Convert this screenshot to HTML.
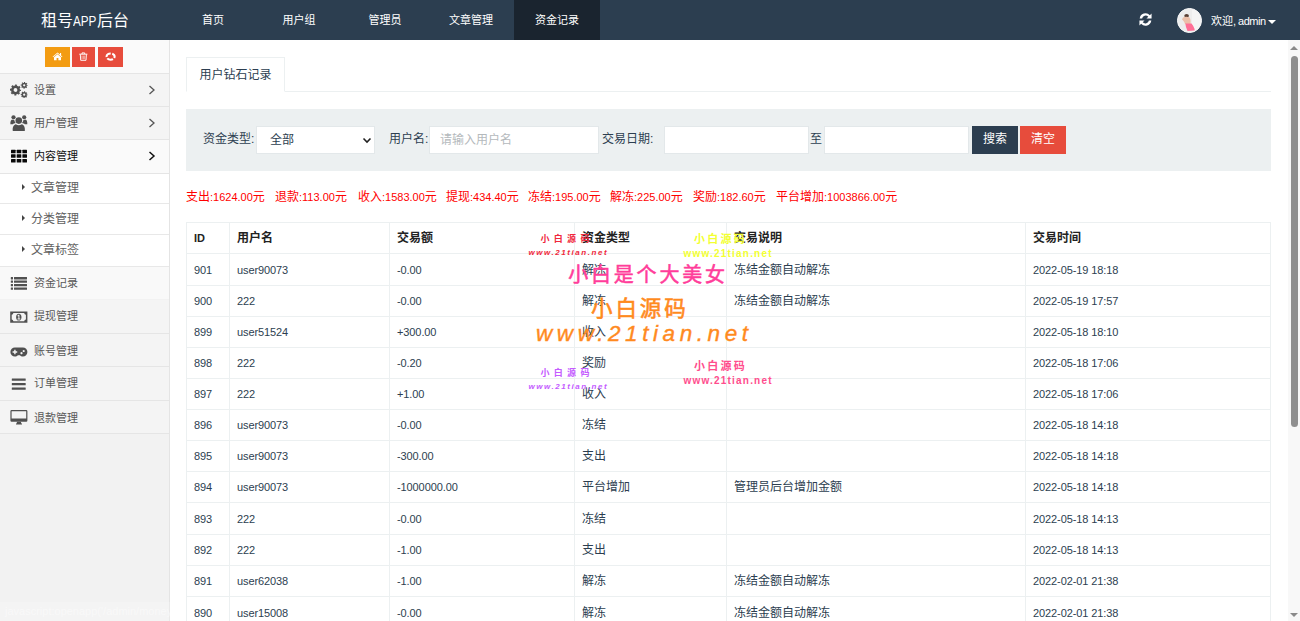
<!DOCTYPE html>
<html lang="zh-CN">
<head>
<meta charset="utf-8">
<title>租号APP后台</title>
<style>
*{box-sizing:border-box;margin:0;padding:0}
html,body{width:1300px;height:621px;overflow:hidden;background:#fff}
body{position:relative;font-family:"Liberation Sans","Noto Sans CJK SC",sans-serif;font-size:12px;color:#2c3e50}
a{text-decoration:none;color:inherit}
/* header */
#hd{position:absolute;left:0;top:0;width:1300px;height:40px;background:#2c3e50;color:#fff}
#brand{position:absolute;left:0;top:0;width:170px;height:40px;line-height:41px;text-align:center;font-size:16px;color:#fff;white-space:nowrap}
#brand b{display:inline-block;font-weight:normal;font-size:15px;width:24px;transform:scaleX(.78);transform-origin:0 50%;text-align:left}
#nav{position:absolute;left:170px;top:0;height:40px;display:flex}
#nav a{display:block;height:40px;line-height:41px;font-size:11px;width:86px;text-align:center;color:#fff}
#nav a.on{background:#1a242f}
#usr{position:absolute;right:0;top:0;height:40px}
#refresh{position:absolute;left:1136.700px;top:11px;width:17px;height:17px}
#avatar{position:absolute;left:1177px;top:8px;width:25px;height:25px;border-radius:50%;background:#f1f1f1;overflow:hidden;border:1px solid #fff}
#welcome{position:absolute;left:1211px;top:0;height:40px;line-height:43px;font-size:11px;color:#fff;white-space:nowrap}
#welcome b{font-weight:normal;letter-spacing:-.5px}
#caret{position:absolute;left:1268px;top:20px;width:0;height:0;border-left:4px solid transparent;border-right:4px solid transparent;border-top:4px solid #fff}
/* sidebar */
#sb{position:absolute;left:0;top:40px;width:170px;height:581px;background:#f2f2f2;border-right:1px solid #e4e4e4}
#sc{position:absolute;left:0;top:0;width:169px;height:34px;background:#fafafa;border-bottom:1px solid #e5e5e5}
.sbtn{position:absolute;top:7px;height:20px}
.mi{position:absolute;left:0;width:169px;height:33px;border-bottom:1px solid #e5e5e5;background:#f4f4f4;font-size:11px;color:#585858;line-height:33px;padding-left:34px}
.mi.open{background:#fafafa;color:#111}
.mi.hov{background:#f9f9f9;border-bottom-color:#f2f2f2}
.mi svg{position:absolute;left:10px;top:8px}
.mi .ar{position:absolute;left:148px;top:10.500px;width:8px;height:10px}
.sm{position:absolute;left:0;width:169px;height:31px;border-bottom:1px solid #e8e8e8;background:#fff;font-size:12px;color:#616161;line-height:30px;padding-left:31px}
.sm:before{content:"";position:absolute;left:22.400px;top:50%;margin-top:-4.500px;border-left:3.800px solid #444;border-top:3.300px solid transparent;border-bottom:3.300px solid transparent}
/* main */
#tab{position:absolute;left:186px;top:57px;width:99px;height:35px;border:1px solid #ecf0f1;border-bottom:1px solid #fff;background:#fff;line-height:35px;text-align:center;font-size:12px;color:#2c3e50;z-index:2}
#tabline{position:absolute;left:186px;top:91px;width:1085px;height:1px;background:#ecf0f1}
#flt{position:absolute;left:186px;top:109px;width:1085px;height:62px;background:#ecf0f1}
#flt .lb{position:absolute;top:0;height:62px;line-height:61px;font-size:12px;color:#2c3e50;white-space:nowrap}
#flt .ip{position:absolute;top:17px;height:28px;background:#fff;border:1px solid #e3e8ea;font-size:12px;line-height:27px;color:#b4b9bc;padding-left:10px}
#flt .bt{position:absolute;top:17px;height:28px;width:46px;color:#fff;font-size:12px;line-height:27px;text-align:center}
#sum{position:absolute;left:186px;top:189px;height:16px;line-height:16px;font-size:12px;color:#ff0000;white-space:nowrap}
#sum span{position:absolute;top:0}
#sum i{font-style:normal;font-size:11px}
table{position:absolute;left:186px;top:222px;width:1084px;letter-spacing:-.1px;border-collapse:collapse;table-layout:fixed;font-size:11px;color:#2c3e50}
td,th{border:1px solid #ecf0f1;height:31px;padding:0 7px;text-align:left;vertical-align:middle;white-space:nowrap;overflow:hidden}
th{font-weight:bold;font-size:11px;color:#222;padding-bottom:4px}
td.c,th.c{font-size:12px;letter-spacing:0}
td.c{padding-bottom:3px}
/* scrollbar */
#scr{position:absolute;left:1288px;top:40px;width:12px;height:581px;background:#f8f8f8}
#thumb{position:absolute;left:2.500px;top:15.500px;width:7.500px;height:371px;border-radius:4px;background:#8f8f8f}
#status{position:absolute;left:0;top:602px;width:372px;height:19px;line-height:18px;padding-left:5px;font-size:11px;color:rgba(255,255,255,.45);background:rgba(255,255,255,.2);white-space:nowrap;overflow:hidden}
.wm{position:absolute;white-space:nowrap;z-index:5;font-weight:bold}
</style>
</head>
<body>
<div id="hd">
  <div id="brand">租号<b>APP</b>后台</div>
  <div id="nav"><a>首页</a><a>用户组</a><a>管理员</a><a>文章管理</a><a class="on">资金记录</a></div>
  <svg id="refresh" viewBox="0 0 14 14"><path d="M2.2 6.2A4.9 4.9 0 0 1 10.6 3.4L12 2v4.2H7.8l1.5-1.5A3 3 0 0 0 4.2 6.2zM11.8 7.8A4.9 4.9 0 0 1 3.4 10.6L2 12V7.8h4.2L4.7 9.3a3 3 0 0 0 5.1-1.5z" fill="#fff"/></svg>
  <div id="avatar"><svg width="23" height="23" viewBox="0 0 23 23"><rect width="23" height="23" fill="#ededed"/><rect x="14" width="9" height="23" fill="#f4f4f4"/><ellipse cx="8.600" cy="6.800" rx="2.300" ry="1.900" fill="#5a4034"/><path d="M5 8.500c1.500-1 4.500-1.300 6.500 0 1.200 1.500 1.300 4 1 6.500H7c-.5-2-1.500-3-3-4.500z" fill="#ecc0aa"/><path d="M7.300 14.600h6.200c1.500 1.800 3 4.500 3.300 6.800l-7.300.6c-1.200-2.500-1.900-5-2.200-7.400z" fill="#ff6f96"/></svg></div>
  <div id="welcome">欢迎<b>, admin</b></div>
  <div id="caret"></div>
</div>

<div id="sb">
  <div id="sc">
    <div class="sbtn" style="left:45px;width:25px;background:#f39c12"><svg width="25" height="20" viewBox="0 0 25 20"><path d="M12.500 5.500L7.600 9.700l.5.600 4.400-3.700 4.400 3.700.5-.6-1.300-1.100V6.100h-1.100v1.500zM12.500 7.300L9 10.200v3h2.600v-2.100h1.800v2.100H16v-3z" fill="#fff"/></svg></div>
    <div class="sbtn" style="left:72.400px;width:23px;background:#e74c3c"><svg width="23" height="20" viewBox="0 0 23 20"><path d="M7.300 7.200h8.100M10 7V5.900h2.700V7M8.300 7.400l.4 5.900h5.300l.4-5.900" fill="none" stroke="#fff" stroke-width=".95"/><path d="M10 8.600v3.600M11.350 8.600v3.600M12.700 8.600v3.600" stroke="#fbd5d0" stroke-width=".7"/></svg></div>
    <div class="sbtn" style="left:98px;width:25px;background:#e74c3c"><svg width="25" height="20" viewBox="0 0 25 20"><ellipse cx="12.600" cy="9.600" rx="4" ry="3.100" fill="none" stroke="#fff" stroke-width="2.100" stroke-dasharray="6 1.500" stroke-dashoffset="4.500"/></svg></div>
  </div>
  <div class="mi" style="top:34px;height:33px;line-height:32px">设置<svg width="18" height="16" viewBox="0 0 18 16"><circle cx="5.5" cy="8" r="3.2" fill="none" stroke="#505050" stroke-width="2.6"/><circle cx="5.5" cy="8" r="4.8" fill="none" stroke="#505050" stroke-width="1.5" stroke-dasharray="1.88 1.88" stroke-dashoffset="0.94"/><circle cx="14.2" cy="3.3" r="1.9" fill="none" stroke="#505050" stroke-width="1.5"/><circle cx="14.2" cy="3.3" r="2.9" fill="none" stroke="#505050" stroke-width="1.1" stroke-dasharray="1.14 1.14" stroke-dashoffset="0.57"/><circle cx="14.2" cy="12.7" r="1.9" fill="none" stroke="#505050" stroke-width="1.5"/><circle cx="14.2" cy="12.7" r="2.9" fill="none" stroke="#505050" stroke-width="1.1" stroke-dasharray="1.14 1.14" stroke-dashoffset="0.57"/></svg><svg class="ar" viewBox="0 0 8 10"><path d="M1.500 1l4.500 4-4.500 4" fill="none" stroke="#555" stroke-width="1.300"/></svg></div>
  <div class="mi" style="top:67px;height:33px;line-height:33px">用户管理<svg width="18" height="16" viewBox="0 0 18 16"><g fill="#505050"><circle cx="8.800" cy="5.600" r="3.300"/><path d="M2.800 16c-.6-4 1.200-6.500 3-6.800 1 .8 2 1.100 3 1.100s2-.3 3-1.100c1.800.3 3.600 2.800 3 6.800z"/><circle cx="3.500" cy="2.300" r="2.100"/><circle cx="14.200" cy="2.300" r="2.100"/><path d="M.4 9.300c-.2-3 .6-4.700 1.800-4.900.6.500 1.300.7 2 .6.300.8.300 1.600 1.500 3-1.300.2-2.300.6-2.800 1.300z"/><path d="M17.300 9.300c.2-3-.6-4.700-1.800-4.900-.6.500-1.300.7-2 .6-.3.800-.3 1.600-1.500 3 1.300.2 2.300.6 2.800 1.300z"/></g></svg><svg class="ar" viewBox="0 0 8 10"><path d="M1.500 1l4.500 4-4.500 4" fill="none" stroke="#555" stroke-width="1.300"/></svg></div>
  <div class="mi open" style="top:100px;height:34px;line-height:33px">内容管理<svg width="18" height="16" viewBox="0 0 18 16"><g fill="#0a0a0a"><rect x="1" y="1.8" width="4.600" height="3.500" rx=".5"/><rect x="6.7" y="1.8" width="4.600" height="3.500" rx=".5"/><rect x="12.4" y="1.8" width="4.600" height="3.500" rx=".5"/><rect x="1" y="6.35" width="4.600" height="3.500" rx=".5"/><rect x="6.7" y="6.35" width="4.600" height="3.500" rx=".5"/><rect x="12.4" y="6.35" width="4.600" height="3.500" rx=".5"/><rect x="1" y="10.9" width="4.600" height="3.500" rx=".5"/><rect x="6.7" y="10.9" width="4.600" height="3.500" rx=".5"/><rect x="12.4" y="10.9" width="4.600" height="3.500" rx=".5"/></g></svg><svg class="ar" viewBox="0 0 8 10"><path d="M1.500 1l4.500 4-4.500 4" fill="none" stroke="#111" stroke-width="1.500"/></svg></div>
  <div class="sm" style="top:134px;height:30px;line-height:28px">文章管理</div>
  <div class="sm" style="top:164px;height:31px;line-height:30px">分类管理</div>
  <div class="sm" style="top:195px;height:32px;line-height:31px">文章标签</div>
  <div class="mi hov" style="top:227px;height:33px;line-height:32.500px">资金记录<svg width="18" height="16" viewBox="0 0 18 16"><g fill="#505050"><rect x=".8" y="2" width="2.200" height="2.400" rx=".3"/><rect x="4" y="2" width="13" height="2.400" rx=".3"/><rect x=".8" y="5.47" width="2.200" height="2.400" rx=".3"/><rect x="4" y="5.47" width="13" height="2.400" rx=".3"/><rect x=".8" y="8.93" width="2.200" height="2.400" rx=".3"/><rect x="4" y="8.93" width="13" height="2.400" rx=".3"/><rect x=".8" y="12.4" width="2.200" height="2.400" rx=".3"/><rect x="4" y="12.4" width="13" height="2.400" rx=".3"/></g></svg></div>
  <div class="mi" style="top:260px;height:34px;line-height:33.500px">提现管理<svg width="18" height="16" viewBox="0 0 18 16"><path fill-rule="evenodd" fill="#505050" d="M.2 3.600h17.200v11.100H.2zM3.400 5.100a2 2 0 0 1-1.700 1.700v4.700a2 2 0 0 1 1.700 1.700h10.800a2 2 0 0 1 1.700-1.700V6.800a2 2 0 0 1-1.700-1.700z"/><path fill-rule="evenodd" fill="#505050" d="M8.800 5.700c1.700 0 2.700 1.500 2.700 3.450s-1 3.450-2.700 3.450-2.700-1.500-2.700-3.450 1-3.450 2.700-3.450zM8.500 6.800l-1 .7v.8h.9v2.300h-.9v.9h2.800v-.9h-.9V6.800z"/></svg></div>
  <div class="mi" style="top:294px;height:33px;line-height:34px">账号管理<svg width="18" height="16" viewBox="0 0 18 16"><path fill-rule="evenodd" fill="#505050" d="M4.900 5.500h8a4.500 4.500 0 0 1 0 9c-1.200 0-2.300-.5-3-1.300H7.900c-.7.800-1.800 1.300-3 1.300a4.500 4.500 0 0 1 0-9zM4.200 7.700v1.600H2.600v1.400h1.600v1.600h1.400v-1.600h1.600V9.300H5.600V7.700zM13.700 7.900a1.100 1.100 0 1 0 .01 0zM11.500 10a1.100 1.100 0 1 0 .01 0z"/></svg></div>
  <div class="mi" style="top:327px;height:34px;line-height:33.500px">订单管理<svg width="18" height="16" viewBox="0 0 18 16"><g fill="#505050"><rect x="1.800" y="3.400" width="13.900" height="2.400" rx=".4"/><rect x="1.800" y="7.900" width="13.900" height="2.400" rx=".4"/><rect x="1.800" y="12.400" width="13.900" height="2.400" rx=".4"/></g></svg></div>
  <div class="mi" style="top:361px;height:33px;line-height:34px">退款管理<svg width="18" height="16" viewBox="0 0 18 16"><path fill-rule="evenodd" fill="#505050" d="M1.600 1h14.600a1.200 1.200 0 0 1 1.200 1.200v9.400a1.200 1.200 0 0 1-1.200 1.200H1.600a1.200 1.200 0 0 1-1.200-1.200V2.200A1.200 1.200 0 0 1 1.600 1zM1.600 2.200v7.400h14.600V2.200z"/><path fill="#505050" d="M6.900 12.800h4l.4 1.700h.7v1.100H6v-1.100h.7z"/></svg></div>
</div>

<div id="tab">用户钻石记录</div>
<div id="tabline"></div>
<div id="flt">
  <span class="lb" style="left:17px">资金类型:</span>
  <div class="ip" style="left:70px;width:119px;color:#2c3e50;padding-left:13px">全部<svg style="position:absolute;right:2px;top:10px" width="10" height="7" viewBox="0 0 10 7"><path d="M1.500 1.500L5 5l3.500-3.500" fill="none" stroke="#222" stroke-width="1.600"/></svg></div>
  <span class="lb" style="left:203px">用户名:</span>
  <div class="ip" style="left:243px;width:170px">请输入用户名</div>
  <span class="lb" style="left:416px">交易日期:</span>
  <div class="ip" style="left:478px;width:145px"></div>
  <span class="lb" style="left:624px">至</span>
  <div class="ip" style="left:638px;width:145px"></div>
  <div class="bt" style="left:786px;background:#2c3e50">搜索</div>
  <div class="bt" style="left:834px;background:#e74c3c">清空</div>
</div>
<div id="sum"><span style="left:0px">支出<i>:1624.00</i>元</span><span style="left:89px">退款<i>:113.00</i>元</span><span style="left:172px">收入<i>:1583.00</i>元</span><span style="left:260px">提现<i>:434.40</i>元</span><span style="left:342px">冻结<i>:195.00</i>元</span><span style="left:424px">解冻<i>:225.00</i>元</span><span style="left:507px">奖励<i>:182.60</i>元</span><span style="left:590px">平台增加<i>:1003866.00</i>元</span></div>

<div id="status">javascript:openapp('/admin/money/index.html','money','资金记录',true);</div>
<table>
<colgroup><col style="width:43px"><col style="width:160px"><col style="width:185px"><col style="width:152px"><col style="width:299px"><col style="width:245px"></colgroup>
<tr style="height:31px"><th style="padding-bottom:1px">ID</th><th class="c">用户名</th><th class="c">交易额</th><th class="c">资金类型</th><th class="c">交易说明</th><th class="c">交易时间</th></tr>
<tr style="height:32px"><td>901</td><td>user90073</td><td>-0.00</td><td class="c">解冻</td><td class="c">冻结金额自动解冻</td><td>2022-05-19 18:18</td></tr>
<tr style="height:31px"><td>900</td><td>222</td><td>-0.00</td><td class="c">解冻</td><td class="c">冻结金额自动解冻</td><td>2022-05-19 17:57</td></tr>
<tr style="height:31px"><td>899</td><td>user51524</td><td>+300.00</td><td class="c">收入</td><td class="c"></td><td>2022-05-18 18:10</td></tr>
<tr style="height:31px"><td>898</td><td>222</td><td>-0.20</td><td class="c">奖励</td><td class="c"></td><td>2022-05-18 17:06</td></tr>
<tr style="height:31px"><td>897</td><td>222</td><td>+1.00</td><td class="c">收入</td><td class="c"></td><td>2022-05-18 17:06</td></tr>
<tr style="height:31px"><td>896</td><td>user90073</td><td>-0.00</td><td class="c">冻结</td><td class="c"></td><td>2022-05-18 14:18</td></tr>
<tr style="height:31px"><td>895</td><td>user90073</td><td>-300.00</td><td class="c">支出</td><td class="c"></td><td>2022-05-18 14:18</td></tr>
<tr style="height:31px"><td>894</td><td>user90073</td><td>-1000000.00</td><td class="c">平台增加</td><td class="c">管理员后台增加金额</td><td>2022-05-18 14:18</td></tr>
<tr style="height:32px"><td>893</td><td>222</td><td>-0.00</td><td class="c">冻结</td><td class="c"></td><td>2022-05-18 14:13</td></tr>
<tr style="height:31px"><td>892</td><td>222</td><td>-1.00</td><td class="c">支出</td><td class="c"></td><td>2022-05-18 14:13</td></tr>
<tr style="height:31px"><td>891</td><td>user62038</td><td>-1.00</td><td class="c">解冻</td><td class="c">冻结金额自动解冻</td><td>2022-02-01 21:38</td></tr>
<tr style="height:32px"><td>890</td><td>user15008</td><td>-0.00</td><td class="c">解冻</td><td class="c">冻结金额自动解冻</td><td>2022-02-01 21:38</td></tr>
</table>

<div id="scr"><div style="position:absolute;left:2px;top:5.500px;border-left:4.200px solid transparent;border-right:4.200px solid transparent;border-bottom:4.500px solid #8a8a8a"></div><div id="thumb"></div><div style="position:absolute;left:2px;top:573px;border-left:4.200px solid transparent;border-right:4.200px solid transparent;border-top:4.500px solid #8a8a8a"></div></div>

<div class="wm" style="left:540.5px;top:231.5px;font-size:9px;color:#f0283c;letter-spacing:4.3px;">小白源码</div>
<div class="wm" style="left:528.5px;top:248.4px;font-size:8px;color:#f0283c;letter-spacing:1.55px;font-style:italic">www.21tian.net</div>
<div class="wm" style="left:694.1px;top:230.1px;font-size:11px;color:#f3ff33;letter-spacing:2.2px;">小白源码</div>
<div class="wm" style="left:683.5px;top:248.2px;font-size:10px;color:#f3ff33;letter-spacing:1.2px;">www.21tian.net</div>
<div class="wm" style="left:568.2px;top:259.0px;font-size:20px;color:#ff3d9a;letter-spacing:2.8px;font-weight:normal;-webkit-text-stroke:.55px #ff3d9a">小白是个大美女</div>
<div class="wm" style="left:591.0px;top:291.0px;font-size:21.5px;color:#ff8a1e;letter-spacing:2.9px;font-weight:normal;-webkit-text-stroke:.6px #ff8a1e">小白源码</div>
<div class="wm" style="left:536.0px;top:321.0px;font-size:22.5px;color:#ff8a1e;letter-spacing:4.57px;font-weight:normal;font-style:italic;-webkit-text-stroke:.4px #ff8a1e">www.21tian.net</div>
<div class="wm" style="left:540.5px;top:366.0px;font-size:9px;color:#c45cff;letter-spacing:4.3px;">小白源码</div>
<div class="wm" style="left:528.5px;top:382.4px;font-size:8px;color:#c45cff;letter-spacing:1.55px;font-style:italic">www.21tian.net</div>
<div class="wm" style="left:694.1px;top:357.0px;font-size:11px;color:#ff4d8d;letter-spacing:2.2px;">小白源码</div>
<div class="wm" style="left:683.5px;top:374.7px;font-size:10px;color:#ff4d8d;letter-spacing:1.2px;">www.21tian.net</div>
</body>
</html>
